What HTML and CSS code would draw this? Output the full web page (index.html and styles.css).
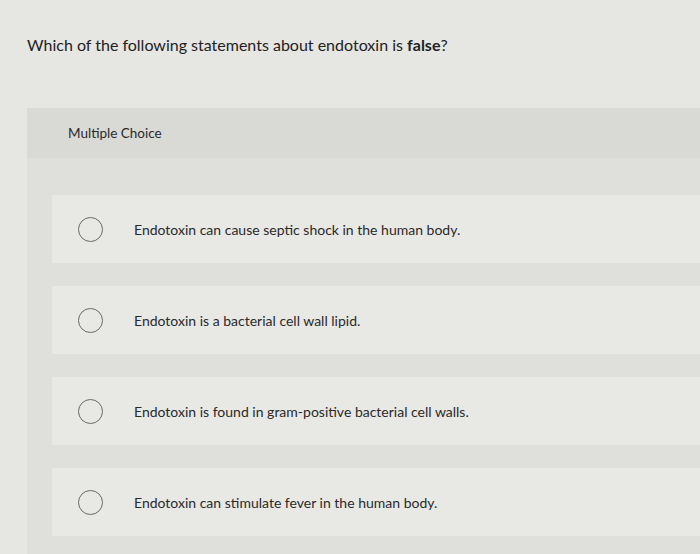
FILE: index.html
```html
<!DOCTYPE html>
<html lang="en">
<head>
<meta charset="utf-8">
<title>Multiple Choice</title>
<link rel="stylesheet" href="styles.css">
</head>
<body>
<main class="page">
  <p class="question">Which of the following statements about endotoxin is <b>false</b>?</p>
  <section class="panel">
    <header class="panel-head">Multiple Choice</header>
    <div class="options">
      <label class="option"><span class="radio"></span><span class="opt-text">Endotoxin can cause septic shock in the human body.</span></label>
      <label class="option"><span class="radio"></span><span class="opt-text">Endotoxin is a bacterial cell wall lipid.</span></label>
      <label class="option"><span class="radio"></span><span class="opt-text">Endotoxin is found in gram-positive bacterial cell walls.</span></label>
      <label class="option"><span class="radio"></span><span class="opt-text">Endotoxin can stimulate fever in the human body.</span></label>
    </div>
  </section>
</main>
</body>
</html>
```

FILE: styles.css
```css
html, body {
  margin: 0;
  padding: 0;
  height: 100%;
  overflow: hidden;
}
body {
  background: #e6e6e3;
  font-family: "Lato", "Liberation Sans", sans-serif;
  color: #2b2b2b;
}
.page {
  padding: 35px 0 0 27px;
}
.question {
  margin: 0;
  font-size: 16px;
  line-height: 20px;
  color: #222;
}
.question b {
  font-weight: 700;
}
.panel {
  margin-top: 53px;
  background: #dfdfdc;
  height: 460px;
}
.panel-head {
  background: #d9d9d6;
  height: 50px;
  display: flex;
  align-items: center;
  padding-left: 41px;
  font-size: 13.5px;
  color: #2a2a2a;
}
.options {
  padding: 37px 0 0 25px;
  display: flex;
  flex-direction: column;
  gap: 23px;
}
.option {
  background: #e8e8e5;
  height: 68px;
  display: flex;
  align-items: center;
  padding-left: 26px;
}
.radio {
  width: 23px;
  height: 23px;
  border: 1.5px solid #6a6a6a;
  border-radius: 50%;
  flex: none;
}
.opt-text {
  margin-left: 31px;
  font-size: 14px;
  color: #2a2a2a;
}
```
